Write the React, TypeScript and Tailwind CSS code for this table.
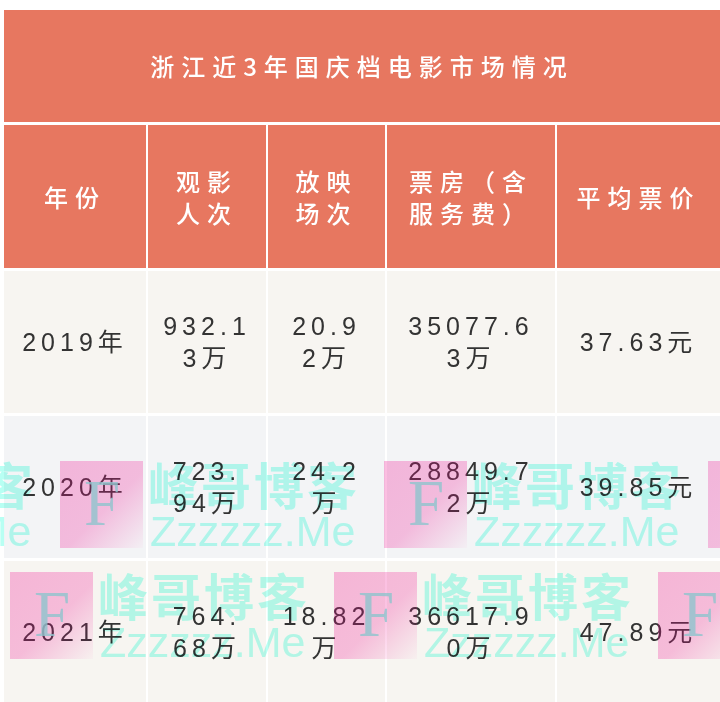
const cjk = "font-['Noto_Sans_CJK_SC',sans-serif]";
const num = "font-['Liberation_Sans','Noto_Sans_CJK_SC',sans-serif]";

const headers = [["年份"], ["观影", "人次"], ["放映", "场次"], ["票房（含", "服务费）"], ["平均票价"]];

const rows = [
  { bg: "bg-[#f7f5f1]", cells: [["2019年"], ["932.1", "3万"], ["20.9", "2万"], ["35077.6", "3万"], ["37.63元"]] },
  { bg: "bg-[#f3f4f6]", cells: [["2020年"], ["723.", "94万"], ["24.2", "万"], ["28849.7", "2万"], ["39.85元"]] },
  { bg: "bg-[#f7f5f1]", cells: [["2021年"], ["764.", "68万"], ["18.82", "万"], ["36617.9", "0万"], ["47.89元"]] },
];

// watermark tiles (pink F box + cyan site name), they sit over the table
const marks = [
  { x: -264, y: 461 },
  { x: 60, y: 461 },
  { x: 384, y: 461 },
  { x: 708, y: 461 },
  { x: 10, y: 572 },
  { x: 334, y: 572 },
  { x: 658, y: 572 },
];

function Mark({ x, y }: { x: number; y: number }) {
  return (
    <div className="pointer-events-none absolute w-[320px] h-[90px]" style={{ left: x, top: y }}>
      <div className="absolute left-0 top-0 w-[83px] h-[87px] bg-[linear-gradient(135deg,rgba(240,16,144,0.28)_0%,rgba(240,16,144,0.25)_55%,rgba(240,16,144,0.02)_100%)]">
        <span className="absolute left-[24px] top-[10px] text-[65px] leading-[65px] text-[#8fc4cd]/80 font-['Liberation_Serif',serif]">
          F
        </span>
      </div>
      <div className={`absolute left-[88px] top-[-3px] whitespace-nowrap text-[50px] leading-[50px] font-bold tracking-[3px] text-[#b8fff3] mix-blend-multiply ${cjk}`}>
        峰哥博客
      </div>
      <div className="absolute left-[90px] top-[49px] whitespace-nowrap text-[43px] leading-[43px] text-[#b8fff3] mix-blend-multiply font-['Liberation_Sans',sans-serif]">
        Zzzzzz.Me
      </div>
    </div>
  );
}

export default function App() {
  return (
    <div className="relative w-[720px] h-[702px] overflow-hidden bg-white pt-[10px] pl-[4px]">
      <div className="grid grid-cols-[142px_118px_117px_168px_163px] gap-x-[2px] gap-y-[3px]">
        <div className={`col-span-5 h-[112px] flex items-center justify-center bg-[#e77760] text-white text-[24px] font-medium tracking-[7px] ${cjk}`}>
          浙江近3年国庆档电影市场情况
        </div>

        {headers.map((lines, i) => (
          <div
            key={i}
            className={`h-[143px] flex flex-col items-center justify-center bg-[#e77760] text-white text-[24px] font-medium leading-[32px] tracking-[7px] ${cjk}`}
          >
            {lines.map((l) => (
              <span key={l}>{l}</span>
            ))}
          </div>
        ))}

        {rows.map((r, ri) =>
          r.cells.map((lines, ci) => (
            <div
              key={`${ri}-${ci}`}
              className={`h-[142px] flex flex-col items-center justify-center ${r.bg} text-[#333333] text-[25px] leading-[32px] tracking-[5px] ${num}`}
            >
              {lines.map((l) => (
                <span key={l}>{l}</span>
              ))}
            </div>
          ))
        )}
      </div>

      {marks.map((m) => (
        <Mark key={`${m.x}-${m.y}`} x={m.x} y={m.y} />
      ))}
    </div>
  );
}
